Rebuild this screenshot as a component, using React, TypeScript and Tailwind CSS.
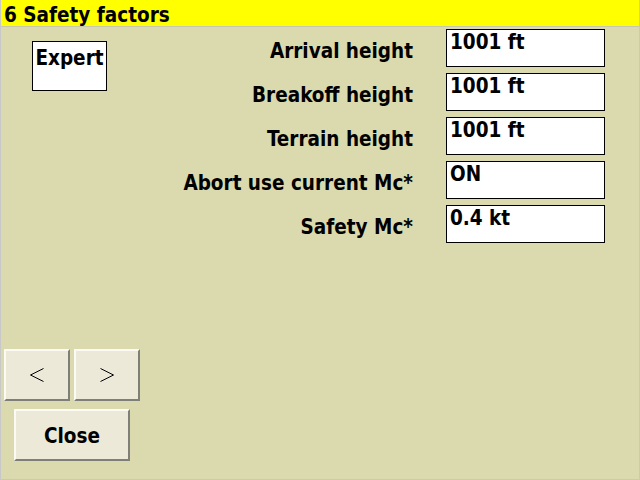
import React from "react";

const rows = [
  ["Arrival height", "1001 ft"],
  ["Breakoff height", "1001 ft"],
  ["Terrain height", "1001 ft"],
  ["Abort use current Mc*", "ON"],
  ["Safety Mc*", "0.4 kt"],
];

function Btn({ className, children }: { className: string; children: React.ReactNode }) {
  return (
    <div
      className={
        "flex items-center justify-center bg-[#ece9d8] border-t-2 border-l-2 border-t-[#fbfaf5] border-l-[#fbfaf5] border-r-2 border-b-2 border-r-[#7f7f7a] border-b-[#7f7f7a] " +
        className
      }
    >
      {children}
    </div>
  );
}

export default function App() {
  return (
    <div
      className="w-[640px] h-[480px] bg-[#dadaae] flex flex-col border-x border-b border-[#c8c8c8] overflow-hidden text-black font-stretch-condensed"
      style={{ fontFamily: '"DejaVu Sans Condensed", "DejaVu Sans", sans-serif' }}
    >
      <div className="h-[27px] bg-[#ffff00] pl-[3px] pt-[5px] text-[20.5px] font-bold leading-none border-b border-[#c8c8b0]">
        6 Safety factors
      </div>
      <div className="flex flex-1">
        <div className="w-[139px] flex flex-col">
          <div className="ml-[31px] mt-[14px] w-[75px] h-[50px] bg-white border border-black flex justify-center pt-[6px] text-[20.5px] font-bold leading-none">
            Expert
          </div>
          <div className="mt-[258px] ml-[3px] flex gap-[4px]">
            <Btn className="w-[66px] h-[52px]">
              <svg width="16" height="14" viewBox="0 0 16 14"><path d="M14.5 0.5 L1.5 7 L14.5 13.5" fill="none" stroke="black" strokeWidth="1" /></svg>
            </Btn>
            <Btn className="w-[66px] h-[52px]">
              <svg width="16" height="14" viewBox="0 0 16 14"><path d="M1.5 0.5 L14.5 7 L1.5 13.5" fill="none" stroke="black" strokeWidth="1" /></svg>
            </Btn>
          </div>
          <Btn className="mt-[8px] ml-[13px] w-[116px] h-[52px] pt-[2px] text-[20.5px] font-bold leading-none">Close</Btn>
        </div>
        <div className="flex flex-col pt-[2px] gap-[6px]">
          {rows.map(([l, v]) => (
            <div key={l} className="flex items-center">
              <div className="w-[273px] text-right text-[20.5px] font-bold leading-none pt-[6px]">{l}</div>
              <div className="ml-[33px] w-[159px] h-[38px] bg-white border border-black pl-[3px] pt-[2px] text-[20.5px] font-bold leading-none">
                {v}
              </div>
            </div>
          ))}
        </div>
      </div>
    </div>
  );
}
